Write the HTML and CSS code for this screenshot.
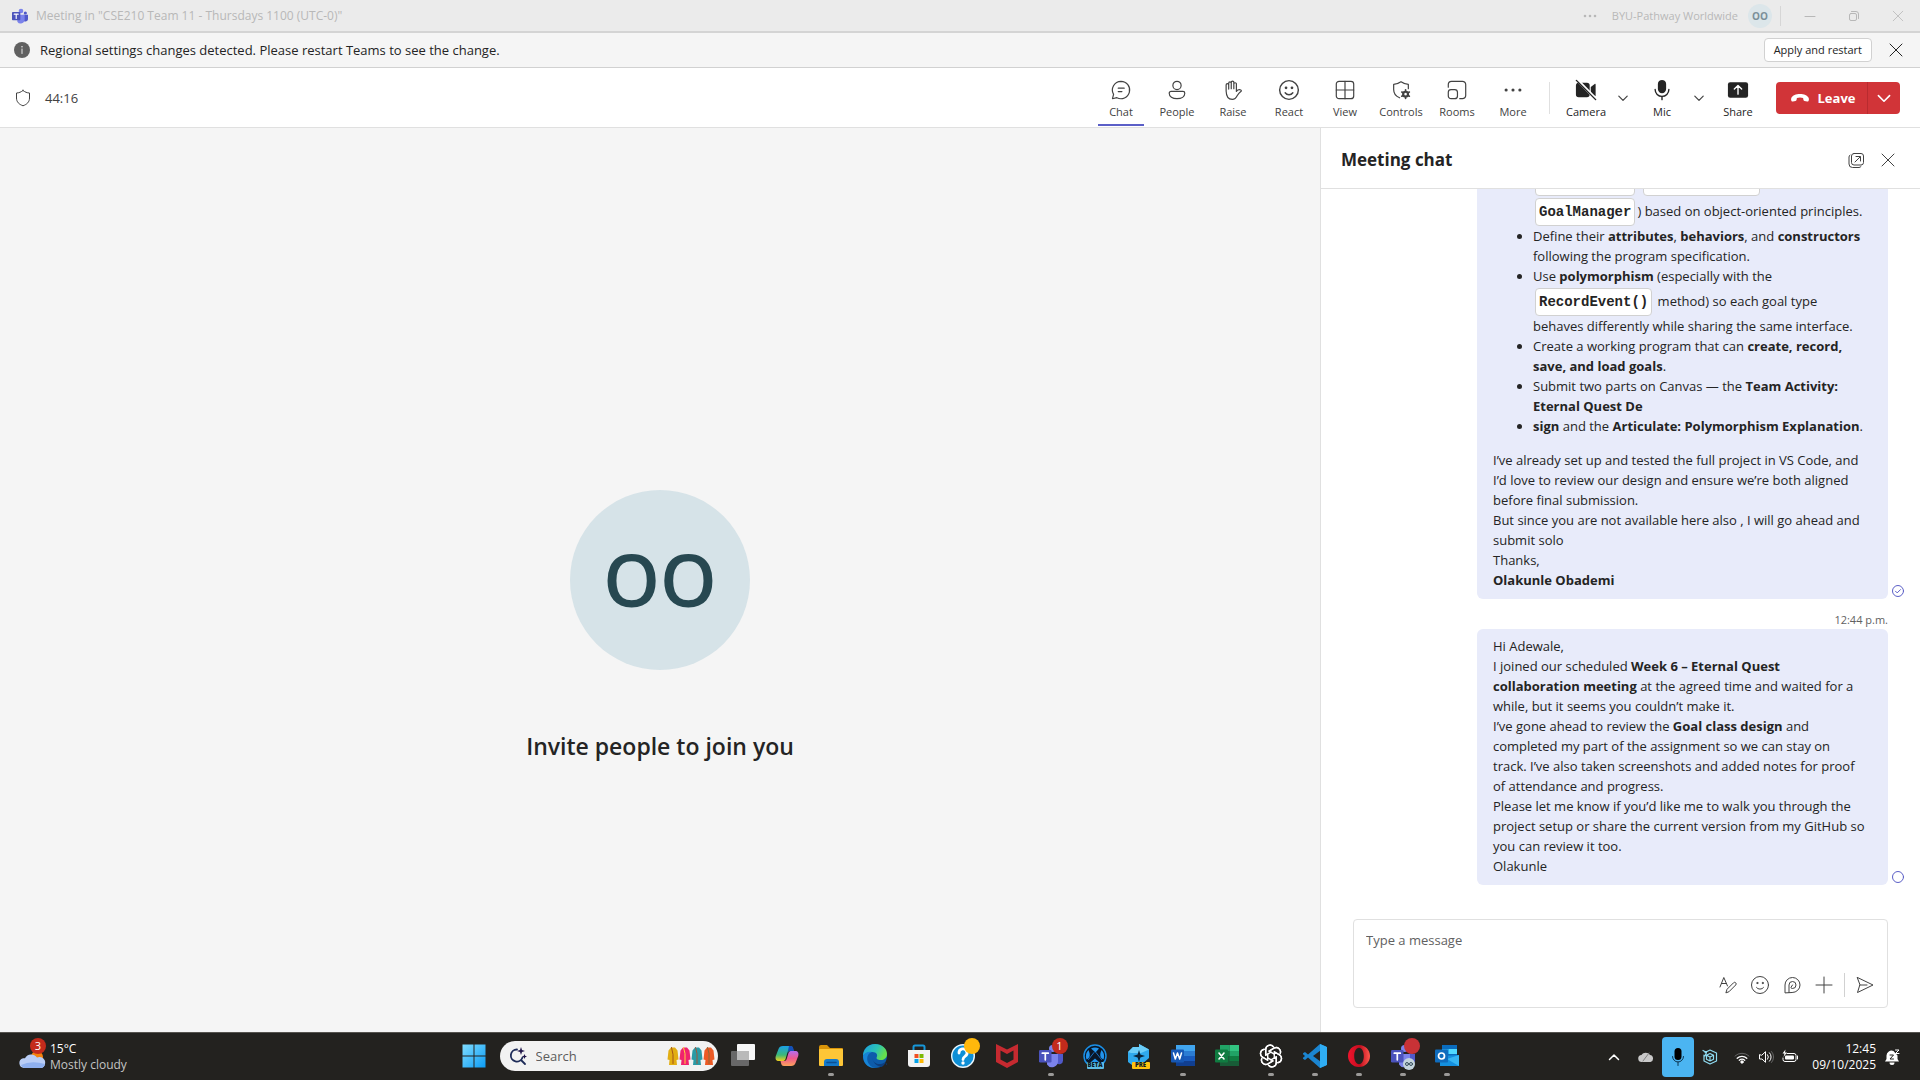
FILE: index.html
```html
<!DOCTYPE html>
<html lang="en">
<head>
<meta charset="utf-8">
<meta name="viewport" content="width=device-width, initial-scale=1">
<title>Meeting in "CSE210 Team 11 - Thursdays 1100 (UTC-0)"</title>
<link rel="stylesheet" href="styles.css">
</head>
<body>
<svg class="sprite" aria-hidden="true">
  <symbol id="close" viewBox="0 0 20 20"><path d="M4 4l12 12M16 4L4 16"/></symbol>
  <symbol id="chevron" viewBox="0 0 20 20"><path d="M3 7l7 7 7-7"/></symbol>
  <symbol id="smile" viewBox="0 0 20 20"><circle cx="10" cy="10" r="8.500"/><path d="M6.500 12.500a4.300 4.300 0 0 0 7 0"/><circle cx="7.300" cy="8" r=".6" fill="currentColor"/><circle cx="12.700" cy="8" r=".6" fill="currentColor"/></symbol>
  <symbol id="teams" viewBox="0 0 24 24"><circle cx="20" cy="7.500" r="2.400" fill="#5059c9"/><circle cx="13.500" cy="4.500" r="3.500" fill="#7b83eb"/><path d="M17.500 10H24v6.500a3.700 3.700 0 0 1-6.500 2.500z" fill="#5059c9"/><path d="M8 10h11v7a6 6 0 0 1-11 3.500z" fill="#7b83eb"/><rect y="6" width="12.500" height="12.500" rx="1.200" fill="#4b53bc"/><path d="M3.300 9.200h6M6.300 9.200v6.600" stroke="#fff" stroke-width="1.700" fill="none"/></symbol>
</svg>

<header class="titlebar">
  <svg class="teams-logo"><use href="#teams"/></svg>
  <span class="window-title">Meeting in "CSE210 Team 11 - Thursdays 1100 (UTC-0)"</span>
  <div class="window-tools">
    <button class="plain" aria-label="Settings and more"><svg class="icon20" viewBox="0 0 20 20"><g fill="currentColor" stroke="none"><circle cx="5" cy="10" r="1.300"/><circle cx="10" cy="10" r="1.300"/><circle cx="15" cy="10" r="1.300"/></g></svg></button>
    <span class="org">BYU-Pathway Worldwide</span>
    <span class="mini-avatar">OO</span>
    <span class="title-rule"></span>
    <button class="plain win-btn" aria-label="Minimise"><svg class="icon12" viewBox="0 0 12 12"><path d="M1 6.500h10"/></svg></button>
    <button class="plain win-btn" aria-label="Restore"><svg class="icon12" viewBox="0 0 12 12"><rect x="1.500" y="3.500" width="7" height="7" rx="1.500"/><path d="M3.500 1.500H8a2.500 2.500 0 0 1 2.500 2.500v4.500"/></svg></button>
    <button class="plain win-btn" aria-label="Close"><svg class="icon16"><use href="#close"/></svg></button>
  </div>
</header>

<section class="notice">
  <svg class="icon16" viewBox="0 0 16 16"><circle cx="8" cy="8" r="8" fill="#616161" stroke="none"/><path d="M8 7v4.500" stroke="#e8e8e8"/><circle cx="8" cy="4.800" r=".8" fill="#e8e8e8" stroke="none"/></svg>
  <span class="notice-text">Regional settings changes detected. Please restart Teams to see the change.</span>
  <button class="apply">Apply and restart</button>
  <button class="plain close-btn" aria-label="Dismiss"><svg class="icon20"><use href="#close"/></svg></button>
</section>

<nav class="toolbar">
  <svg class="icon20" viewBox="0 0 20 20"><path d="M10 2.500c2 1.600 4 2.400 6.500 2.500v5c0 4-2.500 6.300-6.500 7.800C6 16.300 3.500 14 3.500 10V5C6 4.900 8 4.100 10 2.500z"/></svg>
  <span class="timer">44:16</span>
  <div class="tools">
    <button class="tool active"><svg class="icon24" viewBox="0 0 24 24"><path d="M12 2.500a9.500 9.500 0 1 1-4.500 17.900L2.700 21.500l1.200-4.700A9.500 9.500 0 0 1 12 2.500z"/><path d="M9 10h6.500M9 13.700h4"/></svg>Chat</button>
    <button class="tool"><svg class="icon24" viewBox="0 0 24 24"><circle cx="12" cy="7" r="4.500"/><path d="M5.500 13.500h13a2 2 0 0 1 2 2c0 3.500-3.500 6-8.500 6s-8.500-2.500-8.500-6a2 2 0 0 1 2-2z"/></svg>People</button>
    <button class="tool"><svg class="icon24" viewBox="0 0 24 24"><path d="M4.500 13V6.500a1.400 1.400 0 0 1 2.800 0V11 4.500a1.400 1.400 0 0 1 2.800 0V10.500 3.700a1.400 1.400 0 0 1 2.800 0V10.500 5.500a1.400 1.400 0 0 1 2.800 0V13.500c1.200-1.500 3-2.300 4.800-1.500.6.300.8.900.4 1.300-2.200 1.600-3.200 3-4.200 4.700-1.200 2.500-2.800 4.200-5.500 4.200C7 22.200 4.700 20 4.500 13z"/></svg>Raise</button>
    <button class="tool"><svg class="icon24"><use href="#smile"/></svg>React</button>
    <button class="tool"><svg class="icon24" viewBox="0 0 24 24"><rect x="2.500" y="2.500" width="19" height="19" rx="3"/><path d="M12 2.500v19M2.500 12h19"/></svg>View</button>
    <button class="tool"><svg class="icon24" viewBox="0 0 24 24"><path d="M10.500 20.500C6.500 19 4 16.300 4 11.500V5.800c3 0 5.500-1 8-2.800 2.500 1.800 5 2.800 8 2.800v4.700"/><circle cx="17" cy="16.500" r="2.600" stroke-width="2.400"/><path d="M17 11.800v2M17 19.200v2M12.900 14.200l1.700 1M19.400 17.800l1.700 1M12.900 18.800l1.700-1M19.400 15.200l1.700-1" stroke-width="1.800"/></svg>Controls</button>
    <button class="tool"><svg class="icon24" viewBox="0 0 24 24"><path d="M2.500 9V6a3.500 3.500 0 0 1 3.500-3.500h12A3.500 3.500 0 0 1 21.500 6v12a3.500 3.500 0 0 1-3.500 3.500h-3"/><rect x="2.500" y="11.500" width="10" height="10" rx="3"/></svg>Rooms</button>
    <button class="tool"><svg class="icon24" viewBox="0 0 24 24"><g fill="currentColor" stroke="none"><circle cx="4.500" cy="12" r="1.700"/><circle cx="12" cy="12" r="1.700"/><circle cx="19.500" cy="12" r="1.700"/></g></svg>More</button>
    <span class="tool-rule"></span>
    <button class="tool device"><svg class="icon24" viewBox="0 0 24 24"><path d="M4.500 4H13a3 3 0 0 1 3 3v10a3 3 0 0 1-3 3H4a3 3 0 0 1-3-3V7a3 3 0 0 1 3.500-3zM17.200 8.800L21.500 5.500c.5-.4 1-.1 1 .5v12c0 .6-.5.900-1 .5l-4.300-3.300z" fill="currentColor" stroke="none"/><path d="M2.500 1l20.500 21" stroke="#fff" stroke-width="3.200"/><path d="M1.500 1.500l21 21" stroke-width="1.500"/></svg>Camera</button>
    <button class="plain arrow" aria-label="Camera options"><svg class="icon12"><use href="#chevron"/></svg></button>
    <button class="tool device"><svg class="icon24" viewBox="0 0 24 24"><rect x="7.500" y="1" width="9" height="14.500" rx="4.500" fill="currentColor" stroke="none"/><path d="M4.500 11.500a7.500 7.500 0 0 0 15 0M12 19v3.500" stroke-width="1.500"/></svg>Mic</button>
    <button class="plain arrow" aria-label="Microphone options"><svg class="icon12"><use href="#chevron"/></svg></button>
    <button class="tool device"><svg class="icon24" viewBox="0 0 24 24"><rect x="1" y="3.500" width="22" height="17" rx="2.500" fill="currentColor" stroke="none"/><path d="M12 16.500v-9M8 11l4-4 4 4" stroke="#fff" stroke-width="1.500"/></svg>Share</button>
    <div class="leave-group">
      <button class="leave"><svg class="icon20" viewBox="0 0 20 20"><path d="M10 6c4 0 7.500 1.400 8.600 3.700.5 1.200.4 2.500-.1 3.300-.3.500-.8.600-1.400.5l-2.600-.5c-.7-.2-1-.6-1.100-1.200l-.3-1.700c-2-.8-4.200-.8-6.200 0l-.3 1.700c-.1.600-.4 1-1.100 1.200l-2.600.5c-.6.100-1.100 0-1.400-.5-.5-.8-.6-2.100-.1-3.300C2.500 7.400 6 6 10 6z" fill="currentColor" stroke="none"/></svg>Leave</button>
      <button class="leave-more" aria-label="Leave options"><svg class="icon16"><use href="#chevron"/></svg></button>
    </div>
  </div>
</nav>

<main class="meeting">
  <section class="stage">
    <div class="avatar">OO</div>
    <p class="invite">Invite people to join you</p>
  </section>

  <aside class="chat">
    <div class="chat-head">
      <h2>Meeting chat</h2>
      <button class="plain close-btn" aria-label="Pop out chat"><svg class="icon20" viewBox="0 0 20 20"><rect x="5.500" y="3.500" width="12" height="11.500" rx="2.500"/><path d="M4 5a3 3 0 0 0-1 2v7a3.500 3.500 0 0 0 3.500 3.500H13a3 3 0 0 0 2-1M9 12l5-5M10 6.500h4.500V11"/></svg></button>
      <button class="plain close-btn" aria-label="Close chat"><svg class="icon20"><use href="#close"/></svg></button>
    </div>

    <div class="messages">
      <article class="message">
        <div class="bubble">
          <ul>
            <li><code>EternalGoal</code> <code>ChecklistGoal</code><br><code>GoalManager</code>) based on object-oriented principles.</li>
            <li>Define their <b>attributes</b>, <b>behaviors</b>, and <b>constructors</b> following the program specification.</li>
            <li>Use <b>polymorphism</b> (especially with the <br><code>RecordEvent()</code> method) so each goal type<br>behaves differently while sharing the same interface.</li>
            <li>Create a working program that can <b>create, record, save, and load goals</b>.</li>
            <li>Submit two parts on Canvas — the <b>Team Activity: Eternal Quest De</b></li>
            <li><b>sign</b> and the <b>Articulate: Polymorphism Explanation</b>.</li>
          </ul>
          <p>I’ve already set up and tested the full project in VS Code, and I’d love to review our design and ensure we’re both aligned before final submission.</p>
          <p>But since you are not available here also , I will go ahead and submit solo</p>
          <p>Thanks,</p>
          <p><b>Olakunle Obademi</b></p>
        </div>
        <svg class="status" viewBox="0 0 14 14"><circle cx="7" cy="7" r="5.500"/><path d="M4.500 7.200l1.700 1.700 3.300-3.300"/></svg>
      </article>
      <time class="sent-at">12:44 p.m.</time>
      <article class="message">
        <div class="bubble">
          <p>Hi Adewale,</p>
          <p>I joined our scheduled <b>Week 6 – Eternal Quest<br>collaboration meeting</b> at the agreed time and waited for a<br>while, but it seems you couldn’t make it.</p>
          <p>I’ve gone ahead to review the <b>Goal class design</b> and<br>completed my part of the assignment so we can stay on<br>track. I’ve also taken screenshots and added notes for proof<br>of attendance and progress.</p>
          <p>Please let me know if you’d like me to walk you through the project setup or share the current version from my GitHub so you can review it too.</p>
          <p>Olakunle</p>
        </div>
        <svg class="status" viewBox="0 0 14 14"><circle cx="7" cy="7" r="5.500"/></svg>
      </article>
    </div>

    <form class="composer">
      <textarea rows="1" aria-label="Type a message" placeholder="Type a message"></textarea>
      <div class="composer-tools">
        <button type="button" class="plain" aria-label="Format"><svg class="icon20" viewBox="0 0 20 20"><path d="M2 12L5.800 2.500 9.500 11M3.500 8.500h4.800M8 17.500l1-3.200 6.500-6.500a1.500 1.500 0 0 1 2.200 2.200L11.200 16.500z"/></svg></button>
        <button type="button" class="plain" aria-label="Emoji"><svg class="icon20"><use href="#smile"/></svg></button>
        <button type="button" class="plain" aria-label="Loop components"><svg class="icon20" viewBox="0 0 20 20"><path d="M3 17.500V10a7.500 7.500 0 1 1 7.500 7.500zM7 17.500V10a3.500 3.500 0 1 1 3.500 3.500c-1.300 0-1.800-.5-1.300-1.500l1.300-2"/></svg></button>
        <button type="button" class="plain" aria-label="Add"><svg class="icon20" viewBox="0 0 20 20"><path d="M10 2v16M2 10h16"/></svg></button>
        <span class="composer-rule"></span>
        <button class="plain" aria-label="Send"><svg class="icon20" viewBox="0 0 20 20"><path d="M2.500 2.500L18 10 2.500 17.500 4.800 10zM4.800 10H12"/></svg></button>
      </div>
    </form>
  </aside>
</main>

<footer class="taskbar">
  <div class="weather">
    <svg class="weather-icon" viewBox="0 0 30 32"><circle cx="19" cy="16" r="6" fill="#f5820c"/><path d="M6 27a5 5 0 0 1-1-9.800h2a7 7 0 0 1 12-.7A5.500 5.500 0 0 1 24 27z" fill="#b9cdf5"/><path d="M6 27a5 5 0 0 1-3-3q10-5 24-1a5 5 0 0 1-4 4z" fill="#8fb0ee"/></svg>
    <span class="badge weather-badge">3</span>
    <div class="weather-text"><span>15°C</span><span class="dim">Mostly cloudy</span></div>
  </div>

  <div class="dock">
    <button class="app" aria-label="Start"><svg class="icon24" viewBox="0 0 24 24"><defs><linearGradient id="win" x2="1" y2="1"><stop stop-color="#7fdcff"/><stop offset="1" stop-color="#0b9cf5"/></linearGradient></defs><path d="M.500.500h11v11H.500zM12.500.500h11v11h-11zM.500 12.500h11v11H.500zM12.500 12.500h11v11h-11z" fill="url(#win)" stroke="none"/></svg></button>
    <label class="search">
      <svg class="icon20" viewBox="0 0 20 20"><path d="M9 3.500a6 6 0 1 0 5.500 8M13 14l4 4" stroke="#1d2b58" stroke-width="1.800"/><path d="M13 1l1 3 3 1-3 1-1 3-1-3-3-1 3-1zM16.500 8l.7 1.800 1.800.7-1.800.7-.7 1.800-.7-1.800-1.800-.7 1.800-.7z" fill="#21164a" stroke="none"/></svg>
      <input type="text" placeholder="Search" aria-label="Search">
      <svg class="coats" viewBox="0 0 48 20"><defs><path id="coat" d="M4 1.500h4l2.500 3 1 9-2 .5.500 5H2l.5-5-2-.5 1-9z"/></defs><g stroke="none"><use href="#coat" fill="#e2ae13"/><use href="#coat" x="12" fill="#f0226e"/><use href="#coat" x="24" fill="#2a9aa5"/><use href="#coat" x="36" fill="#ec5a25"/></g><path d="M4.500 1.500l1.500 7v9" stroke="#a2541a"/><path d="M16.500 1.500l1.500 6v10" stroke="#ffd23c"/><path d="M28.500 1.500l1.500 6v10" stroke="#a0563b"/><path d="M40.500 1.500l1.500 6v10" stroke="#8e6a3a"/></svg>
    </label>
    <button class="app" aria-label="Task view"><svg class="icon24" viewBox="0 0 24 24"><g stroke="none"><rect x="6" width="18" height="16" rx="1" fill="#f7f7f7"/><rect y="7" width="18" height="15" rx="1" fill="#686868"/><rect x="6" y="7" width="12" height="9" fill="#b9b9b9"/></g></svg></button>
    <button class="app" aria-label="Copilot"><svg class="icon24" viewBox="0 0 24 24"><defs><linearGradient id="cpa" y2="1" x2="0"><stop stop-color="#1aa0e8"/><stop offset=".6" stop-color="#3cb878"/><stop offset="1" stop-color="#f2d21b"/></linearGradient><linearGradient id="cpb" y2="1" x2="0"><stop stop-color="#b56cf0"/><stop offset=".5" stop-color="#ef5a8c"/><stop offset="1" stop-color="#fca35a"/></linearGradient></defs><g stroke="none"><path d="M8 2h7c2 0 2.500 1 3 3l.5 2H15c-2 0-2.500 1-3 3l-1.500 5c-.5 1.500-1.500 2-3 2H4c-3 0-4-2-3.200-5L3.500 5C4.200 3 5.500 2 8 2z" fill="url(#cpa)"/><path d="M14 2h2c1.500 0 2 1 2.500 3l.5 2h-4c-1.500 0-2 .5-2.600 2.200z" fill="#1450b8"/><path d="M16 22H9c-2 0-2.500-1-3-3l-.5-2H9c2 0 2.500-1 3-3l1.500-5c.5-1.500 1.500-2 3-2H20c3 0 4 2 3.200 5l-2.700 7c-.7 2-2 3-4.500 3z" fill="url(#cpb)"/></g></svg></button>
    <button class="app open" aria-label="File Explorer"><svg class="icon24" viewBox="0 0 24 24"><g stroke="none"><path d="M0 3a2 2 0 0 1 2-2h6l3 3h12a1 1 0 0 1 1 1v6H0z" fill="#d99409"/><rect y="5" width="24" height="17" rx="1" fill="#fdc637"/><path d="M5 22v-4a3 3 0 0 1 3-3h9a3 3 0 0 1 3 3v4z" fill="#1479c9"/><path d="M8 18.500h9" stroke="#0b4f93" stroke-width="1.500"/></g></svg></button>
    <button class="app" aria-label="Edge"><svg class="icon24" viewBox="0 0 24 24"><defs><linearGradient id="edge" x2="1" y2=".4"><stop stop-color="#1b9de2"/><stop offset=".6" stop-color="#2cc3b5"/><stop offset="1" stop-color="#66e04c"/></linearGradient></defs><g stroke="none"><circle cx="12" cy="12" r="12" fill="#0d5cab"/><path d="M0 12C0 5 5 0 12 0s12 4.500 12 10c0 4-3 6-6 6-3.500 0-5-1.500-4.300-2.800C15 11 13.500 8 9.500 8 5 8 1 10 0 12z" fill="url(#edge)"/><path d="M0 12c1-3 5-5 9-4-4 1-5.500 5-4.500 9 1 3.500 4 6.500 8 7C5 24.500 0 19 0 12z" fill="#1784d6"/><path d="M9.500 14c0 4 4 6.500 8 6 2-.3 3.500-1 4.500-1.700l2 1.700-2 3h-3c-5-.5-9-4-9.500-9z" fill="#0c3f80"/><path d="M22.500 18.500L24 24h-7c2.500-1 4.500-3 5.500-5.500z" fill="#23221f"/></g></svg></button>
    <button class="app" aria-label="Microsoft Store"><svg class="icon24" viewBox="0 0 24 24"><path d="M6.500 7V3a1.500 1.500 0 0 1 1.500-1.500h8A1.500 1.500 0 0 1 17.500 3v4" stroke="#1797d9" stroke-width="2"/><g stroke="none"><path d="M1 6h22v14a3 3 0 0 1-3 3H4a3 3 0 0 1-3-3z" fill="#f3f3f3"/><path d="M7.500 10h4v4h-4z" fill="#f04e23"/><path d="M12.500 10h4v4h-4z" fill="#7cb902"/><path d="M7.500 15h4v4h-4z" fill="#05a3ea"/><path d="M12.500 15h4v4h-4z" fill="#fdb804"/></g></svg></button>
    <button class="app" aria-label="Get Help"><svg class="icon24" viewBox="0 0 24 24"><circle cx="12" cy="12" r="11.300" fill="#0e8fd6" stroke="#e9f5fb" stroke-width="1.400"/><path d="M8 9a4 4 0 1 1 6 3.300c-1.500 1-2 1.700-2 3.200" stroke="#fff" stroke-width="2.800"/><circle cx="12" cy="19" r="1.700" fill="#fff" stroke="none"/></svg><span class="badge dot-yellow"></span></button>
    <button class="app" aria-label="McAfee"><svg class="icon24" viewBox="0 0 24 24"><path d="M1 0l11 5.500L23 0v18l-11 6-11-6zM5.500 6.500V15.500L12 19l6.500-3.500v-9L12 10z" fill="#c62a30" fill-rule="evenodd" stroke="none"/></svg></button>
    <button class="app open" aria-label="Teams"><svg class="icon24"><use href="#teams"/></svg><span class="badge">1</span></button>
    <button class="app" aria-label="Beta client"><svg class="icon24" viewBox="0 0 24 24"><circle cx="12" cy="12" r="11" fill="#0a1626" stroke="#1a8fe6" stroke-width="1.500"/><g fill="#2195ee" stroke="none"><path d="M8 4.500a9 9 0 0 1 8 0l-3.500 4z"/><path d="M18.500 6a9 9 0 0 1 2 9.500c-3-1-4.500-4-2-9.500z"/><path d="M5.500 6a9 9 0 0 0-2 9.500c3-1 4.500-4 2-9.500z"/><path d="M8 18l4-3.500 4 3.500z"/></g><path d="M5.500 15.500L11 8.500M13 8.500l5.500 7" stroke="#1a6fc0"/></svg><span class="app-tag beta">BETA</span></button>
    <button class="app" aria-label="Preview client"><svg class="icon24" viewBox="0 0 24 24"><g stroke="none"><path d="M1 8l5-5h6V0l10 5.500V14l-8 7H5l-4-3z" fill="#2fa9ed"/><path d="M6 3h6V0l10 5.500L14 9H4L1 8z" fill="#6bcdf8"/><path d="M12 6l1.400 4.600L18 12l-4.600 1.400L12 18l-1.400-4.600L6 12l4.600-1.400z" fill="#0a2236"/></g></svg><span class="app-tag pre">PRE</span></button>
    <button class="app open" aria-label="Word"><svg class="icon24" viewBox="0 0 24 24"><g stroke="none"><path d="M5 1h19v6H5z" fill="#41a5ee"/><path d="M5 7h19v5H5z" fill="#2b7cd3"/><path d="M5 12h19v5H5z" fill="#185abd"/><path d="M5 17h19v5H5z" fill="#103f91"/><rect y="5.500" width="13" height="13" rx="1" fill="#1658b5"/></g><path d="M2.500 9l1.800 6 2.200-6 2.200 6 1.800-6" stroke="#fff" stroke-width="1.500"/></svg></button>
    <button class="app" aria-label="Excel"><svg class="icon24" viewBox="0 0 24 24"><g stroke="none"><path d="M5 1h9.500v6H5z" fill="#21a366"/><path d="M14.500 1H24v6h-9.500z" fill="#33c481"/><path d="M5 7h9.500v5H5z" fill="#107c41"/><path d="M14.500 7H24v5h-9.500z" fill="#21a366"/><path d="M5 12h19v10H5z" fill="#185c37"/><path d="M14.500 12H24v5h-9.500z" fill="#107c41"/><rect y="5.500" width="13" height="13" rx="1" fill="#107c41"/></g><path d="M4 9l5 6M9 9l-5 6" stroke="#fff" stroke-width="1.600"/></svg></button>
    <button class="app open" aria-label="ChatGPT"><svg class="icon24" viewBox="0 0 24 24"><defs><path id="petal" d="M12 8.200L6.800 11.200V5.500a4.300 4.300 0 0 1 7.800-2.600M10 7l5.200-3a4.300 4.300 0 0 1 6.100 5"/></defs><g stroke="#fff" stroke-width="1.400"><use href="#petal"/><use href="#petal" transform="rotate(60 12 12)"/><use href="#petal" transform="rotate(120 12 12)"/><use href="#petal" transform="rotate(180 12 12)"/><use href="#petal" transform="rotate(240 12 12)"/><use href="#petal" transform="rotate(300 12 12)"/></g></svg></button>
    <button class="app open" aria-label="Visual Studio Code"><svg class="icon24" viewBox="0 0 24 24"><g stroke="none"><path d="M17 0l6 2.500v19L17 24 5 13.500 2 16l-2-1.200v-1L2 12 0 10.200v-1L2 8l3 2.500z" fill="#1b85d0"/><path d="M17.500 6.500v11L10 12z" fill="#23221f"/><path d="M17 0l7 3v18l-7 3z" fill="#2fadf3"/></g></svg></button>
    <button class="app open" aria-label="Opera"><svg class="icon24" viewBox="0 0 24 24"><defs><linearGradient id="opera" x2="1"><stop stop-color="#f0142d"/><stop offset=".55" stop-color="#c20d1e"/><stop offset="1" stop-color="#ff5a4e"/></linearGradient></defs><path d="M12 1c6.500 0 11 5 11 11s-4.500 11-11 11S1 18 1 12 5.500 1 12 1zm0 2.800c-3 0-4.800 3.700-4.800 8.200s1.800 8.200 4.800 8.200 4.800-3.700 4.800-8.200S15 3.800 12 3.800z" fill="url(#opera)" fill-rule="evenodd" stroke="none"/></svg></button>
    <button class="app open" aria-label="Teams meeting"><svg class="icon24"><use href="#teams"/></svg><svg class="overlay" viewBox="0 0 12 12"><circle cx="6" cy="6" r="6" fill="#c4d4dd" stroke="none"/><circle cx="4" cy="6" r="1.500" stroke="#38505c"/><circle cx="8" cy="6" r="1.500" stroke="#38505c"/></svg><span class="badge dot-red"></span></button>
    <button class="app open" aria-label="Outlook"><svg class="icon24" viewBox="0 0 24 24"><g stroke="none"><path d="M7 1h15v13H7z" fill="#0a6cbd"/><path d="M14 5h8v5h-8z" fill="#50d9ff"/><path d="M7 5h7v5H7z" fill="#28a8ea"/><path d="M5 12l19-1v11H5z" fill="#1490df"/><path d="M24 11v11L12 15z" fill="#36b5f2"/><rect y="5.500" width="13" height="13" rx="1" fill="#0f6cbd"/></g><circle cx="6.500" cy="12" r="3" stroke="#fff" stroke-width="1.700"/></svg></button>
  </div>

  <div class="tray">
    <button class="tray-btn" aria-label="Hidden icons"><svg class="icon16" viewBox="0 0 16 16"><path d="M3.500 10.500L8 6l4.500 4.500" stroke-width="1.500"/></svg></button>
    <button class="tray-btn" aria-label="OneDrive"><svg class="icon16" viewBox="0 0 16 16"><path d="M4 13a3.500 3.500 0 0 1-.5-7A5 5 0 0 1 12 6a3.600 3.600 0 0 1 .5 7z" fill="#c9c9c9" stroke="none"/><path d="M5 12l6-8" stroke="#828282"/></svg></button>
    <button class="mic-live" aria-label="Microphone in use"><svg class="icon20" viewBox="0 0 20 20"><rect x="6.500" y="1" width="7" height="12" rx="3.500" fill="#000" stroke="none"/><path d="M4.500 9.500a5.500 5.500 0 0 0 11 0M10 15v3.500" stroke="#0b3450"/></svg></button>
    <button class="tray-btn" aria-label="Sync"><svg class="icon16" viewBox="0 0 16 16"><path d="M3 3.500L8 1l6.500 3v8L8 15l-6-3V6M1 1.500l3.500 2L3 7M8 4.500l3.500 1.700v4L8 12l-3.500-1.800v-4zM4.500 6.200L8 8l3.500-1.800M8 8v4" stroke="#8fdcf2" stroke-width="1.200"/></svg></button>
    <button class="status-group" aria-label="Network, volume and battery">
      <svg class="icon16" viewBox="0 0 16 16"><path d="M1 7a10 10 0 0 1 14 0" stroke="#666"/><path d="M3.200 9.300a7 7 0 0 1 9.600 0M5.300 11.300a4 4 0 0 1 5.400 0" stroke-width="1.300"/><circle cx="8" cy="13" r="1.200" fill="currentColor"/></svg>
      <svg class="icon16" viewBox="0 0 16 16"><path d="M1.500 6v4H4l3.500 3.300V2.700L4 6zM9.500 5.700a3.500 3.500 0 0 1 0 4.600M11.500 3.800a6 6 0 0 1 0 8.400"/><path d="M13.500 2.500a8 8 0 0 1 0 11" stroke="#666"/></svg>
      <svg class="icon16" viewBox="0 0 16 16"><path d="M5 4.500h7a2 2 0 0 1 2 2v4a2 2 0 0 1-2 2H3a2 2 0 0 1-2-2V9M15.500 7v3"/><rect x="3" y="6.500" width="9" height="4" rx="1" fill="currentColor" stroke="none"/><path d="M3.500.500L.5 4.500h2L1.500 8 5 3.500H3z" fill="currentColor" stroke="none"/></svg>
    </button>
    <time class="clock"><span>12:45</span><span>09/10/2025</span></time>
    <button class="tray-btn" aria-label="Notifications"><svg class="icon16" viewBox="0 0 16 16"><path d="M1 12.500l1.500-2.500V6.500a5 5 0 0 1 7-4.500l4 4.500V10l1.500 2.500zM5.500 13.500h5a2.500 2.500 0 0 1-5 0z" fill="currentColor" stroke="none"/><path d="M6 6h3.500L6 10h3.500" stroke="#23221f"/><path d="M11.500 1H15l-3.500 3.500H15"/></svg></button>
  </div>
</footer>
</body>
</html>
```
FILE: styles.css
```css
* { box-sizing: border-box; }

body {
  margin: 0;
  height: 100vh;
  display: flex;
  flex-direction: column;
  overflow: hidden;
  background: #fff;
  color: #242424;
  font: 13px/20px "Open Sans", "Noto Sans", sans-serif;
}

p, h2, ul { margin: 0; }
button, input, textarea { font: inherit; color: inherit; }
button { cursor: pointer; }
b { font-weight: 700; }

svg {
  flex: none;
  fill: none;
  stroke: currentColor;
  stroke-width: 1;
  stroke-linecap: round;
  stroke-linejoin: round;
}
.sprite { position: absolute; width: 0; height: 0; }
#teams { stroke: none; }
#chevron { stroke-width: 2; }
.icon12 { width: 12px; height: 12px; }
.icon16 { width: 16px; height: 16px; }
.icon20 { width: 20px; height: 20px; }
.icon24 { width: 24px; height: 24px; }

.plain {
  display: flex;
  align-items: center;
  justify-content: center;
  padding: 0;
  border: 0;
  background: none;
}

/* Window title bar */
.titlebar {
  flex: none;
  display: flex;
  align-items: center;
  height: 33px;
  padding-left: 12px;
  background: #ebebeb;
  border-bottom: 2px solid #d4d4d4;
  color: #b8b8b8;
  font-size: 12px;
}
.teams-logo { width: 16px; height: 16px; stroke: none; }
.window-title { margin-left: 8px; }
.window-tools { display: flex; align-items: center; margin-left: auto; }
.org { margin-left: 12px; font-size: 11px; }
.mini-avatar {
  width: 24px;
  height: 24px;
  margin: 0 8px 0 10px;
  border-radius: 50%;
  background: #dce6ea;
  color: #7b9099;
  font-size: 10px;
  font-weight: 700;
  line-height: 24px;
  text-align: center;
}
.title-rule { width: 1px; height: 20px; margin-right: 7px; background: #d6d6d6; }
.win-btn { width: 44px; height: 30px; }

/* Restart notice */
.notice {
  flex: none;
  display: flex;
  align-items: center;
  height: 35px;
  padding: 0 12px 0 14px;
  background: #f5f5f5;
  border-bottom: 1px solid #d1d1d1;
}
.notice-text { margin-left: 10px; color: #242424; }
.apply {
  height: 24px;
  margin-left: auto;
  padding: 0 9px;
  border: 1px solid #d1d1d1;
  border-radius: 4px;
  background: #fff;
  font-size: 11px;
  line-height: 20px;
}
.close-btn { width: 24px; height: 24px; }
.notice .close-btn { margin-left: 12px; }

/* Meeting toolbar */
.toolbar {
  flex: none;
  display: flex;
  align-items: center;
  height: 60px;
  padding: 0 20px 0 13px;
  border-bottom: 1px solid #e0e0e0;
  color: #424242;
}
.timer { margin-left: 12px; }
.tools { display: flex; align-items: center; height: 100%; margin-left: auto; }
.tool {
  display: flex;
  flex-direction: column;
  align-items: center;
  width: 46px;
  height: 100%;
  margin-right: 10px;
  padding: 11px 0 0;
  border: 0;
  border-bottom: 2px solid transparent;
  background: none;
  font-size: 11px;
  line-height: 18px;
}
.tool .icon24 { width: 22px; height: 22px; margin-bottom: 2px; stroke-width: 1.300; }
.tool.active { height: 58px; align-self: flex-start; border-color: #5b5fc7; }
.tool-rule { width: 1px; height: 32px; margin: 0 13px 0 3px; background: #e0e0e0; }
.device { margin-right: 0; color: #242424; }
.arrow { width: 28px; height: 32px; margin-right: 2px; }
.leave-group { display: flex; height: 32px; margin-left: 15px; }
.leave, .leave-more {
  display: flex;
  align-items: center;
  justify-content: center;
  border: 0;
  background: #d13438;
  color: #fff;
}
.leave {
  gap: 8px;
  width: 91px;
  padding: 0 0 0 2px;
  border-radius: 4px 0 0 4px;
  font-weight: 700;
}
.leave-more {
  width: 33px;
  padding: 0;
  border-left: 1px solid #b92b2f;
  border-radius: 0 4px 4px 0;
}

/* Stage */
.meeting { flex: 1; display: flex; min-height: 0; }
.stage {
  flex: 1;
  display: grid;
  grid-template-rows: 1fr auto 1fr;
  justify-items: center;
  background: #f5f5f5;
}
.avatar {
  grid-row: 2;
  width: 180px;
  height: 180px;
  border-radius: 50%;
  background: #d6e3e8;
  color: #274851;
  font-size: 72px;
  font-weight: 600;
  line-height: 178px;
  text-align: center;
}
.invite {
  grid-row: 3;
  padding-top: 60px;
  font-size: 23px;
  font-weight: 600;
  line-height: 32px;
}

/* Chat panel */
.chat {
  flex: 0 0 31.250%;
  display: flex;
  flex-direction: column;
  min-width: 0;
  border-left: 1px solid #e0e0e0;
  background: #fff;
}
.chat-head {
  flex: none;
  display: flex;
  align-items: center;
  gap: 8px;
  height: 61px;
  padding: 4px 20px 0;
  border-bottom: 1px solid #e0e0e0;
  color: #424242;
}
.chat-head h2 {
  margin-right: auto;
  color: #242424;
  font-size: 17px;
  font-weight: 700;
  line-height: 24px;
}
.messages {
  flex: 1;
  display: flex;
  flex-direction: column;
  justify-content: flex-end;
  min-height: 0;
  padding: 0 15px 34px;
  overflow: hidden;
}
.message {
  flex: none;
  display: flex;
  align-items: flex-end;
  justify-content: flex-end;
  gap: 3px;
}
.bubble {
  width: 411px;
  padding: 7px 16px 9px;
  border-radius: 6px;
  background: #e8ebfa;
}
.bubble ul { margin-bottom: 14px; padding-left: 40px; }
.bubble b { font-weight: 700; }
.bubble code {
  display: inline-block;
  margin: 2px 2px 0;
  padding: 3px;
  border: 1px solid #d1d1d1;
  border-radius: 4px;
  background: #fff;
  font: 600 14px/20px "Liberation Mono", monospace;
}
.status { width: 14px; height: 14px; margin-bottom: 1px; color: #5b5fc7; }
.sent-at {
  flex: none;
  align-self: flex-end;
  margin: 13px 17px 1px 0;
  color: #616161;
  font-size: 11px;
  line-height: 16px;
}

.composer {
  flex: none;
  display: flex;
  flex-direction: column;
  justify-content: space-between;
  height: 89px;
  margin: 0 32px 24px;
  padding: 10px 12px;
  border: 1px solid #e0e0e0;
  border-radius: 4px;
}
.composer textarea {
  padding: 0;
  border: 0;
  outline: 0;
  resize: none;
  background: none;
  line-height: 20px;
}
.composer textarea::placeholder { color: #616161; }
.composer-tools {
  display: flex;
  align-items: center;
  justify-content: flex-end;
  gap: 12px;
  color: #424242;
}
.composer-rule { width: 1px; height: 24px; margin: 0 -2px; background: #d1d1d1; }

/* Taskbar */
.taskbar {
  flex: none;
  display: grid;
  grid-template-columns: 1fr auto 1fr;
  height: 48px;
  border-top: 1px solid #55534f;
  background: #23221f;
  color: #fff;
  font-size: 12px;
  line-height: 16px;
}
.weather { position: relative; display: flex; align-items: center; padding-left: 18px; }
.weather-icon { width: 30px; height: 32px; stroke: none; }
.weather-text { display: flex; flex-direction: column; margin-left: 2px; }
.dim { color: #c4c4c4; }
.badge {
  position: absolute;
  top: 5px;
  right: 5px;
  width: 16px;
  height: 16px;
  border-radius: 50%;
  background: #c42b1c;
  color: #fff;
  font-size: 11px;
  line-height: 16px;
  text-align: center;
}
.weather-badge { left: 30px; }
.dot-yellow { background: #ffb80c; }
.dot-red { background: #c83236; }
.overlay { position: absolute; left: 22px; top: 25px; width: 12px; height: 12px; }

.dock { display: flex; align-items: center; padding-bottom: 2px; }
.app {
  position: relative;
  display: flex;
  align-items: center;
  justify-content: center;
  width: 44px;
  height: 45px;
  padding: 0;
  border: 0;
  background: none;
}
.open::after {
  content: "";
  position: absolute;
  left: 19px;
  bottom: 2px;
  width: 6px;
  height: 3px;
  border-radius: 2px;
  background: #9b9a98;
}
.app-tag {
  position: absolute;
  bottom: 9px;
  border-radius: 1px;
  color: #0b1a26;
  font-size: 6px;
  font-weight: 800;
  line-height: 7px;
}
.beta { left: 14px; width: 17px; background: #5dbce6; }
.pre { left: 15px; width: 18px; background: #ffc20e; }
.search {
  display: flex;
  align-items: center;
  width: 218px;
  height: 30px;
  margin: 0 3px 0 4px;
  padding: 0 3px 0 8px;
  border-radius: 15px;
  background: #f2f2f2;
}
.search input {
  flex: 1;
  min-width: 0;
  padding: 0 0 0 8px;
  border: 0;
  outline: 0;
  background: none;
  color: #333;
  font-size: 13px;
}
.search input::placeholder { color: #5c5c5c; }
.coats { width: 48px; height: 20px; }

.tray { display: flex; align-items: center; justify-content: flex-end; padding-right: 12px; }
.tray-btn, .mic-live, .status-group {
  display: flex;
  align-items: center;
  justify-content: center;
  width: 32px;
  height: 40px;
  padding: 0;
  border: 0;
  background: none;
}
.mic-live { border-radius: 4px; background: #4bb5f2; }
.status-group { gap: 8px; width: 80px; }
.clock {
  display: flex;
  flex-direction: column;
  width: 70px;
  text-align: right;
}
```
